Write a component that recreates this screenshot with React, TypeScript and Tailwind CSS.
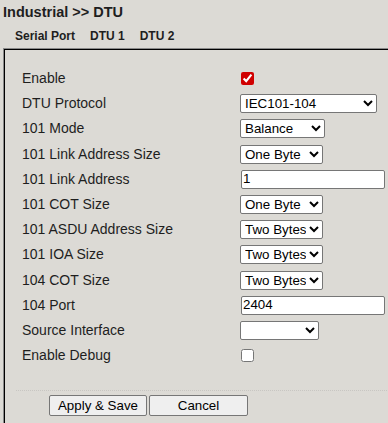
import React from 'react';

type Row = {
  label: string;
  kind: 'check' | 'select' | 'text';
  value?: string;
  options?: string[];
  width?: string;
  checked?: boolean;
};

const rows: Row[] = [
  { label: 'Enable', kind: 'check', checked: true },
  { label: 'DTU Protocol', kind: 'select', value: 'IEC101-104', options: ['IEC101-104'], width: 'w-[137px]' },
  { label: '101 Mode', kind: 'select', value: 'Balance', options: ['Balance', 'Unbalance'], width: 'w-[85px]' },
  { label: '101 Link Address Size', kind: 'select', value: 'One Byte', options: ['One Byte', 'Two Bytes'], width: 'w-[83px]' },
  { label: '101 Link Address', kind: 'text', value: '1' },
  { label: '101 COT Size', kind: 'select', value: 'One Byte', options: ['One Byte', 'Two Bytes'], width: 'w-[83px]' },
  { label: '101 ASDU Address Size', kind: 'select', value: 'Two Bytes', options: ['One Byte', 'Two Bytes'], width: 'w-[83px]' },
  { label: '101 IOA Size', kind: 'select', value: 'Two Bytes', options: ['One Byte', 'Two Bytes', 'Three Bytes'], width: 'w-[83px]' },
  { label: '104 COT Size', kind: 'select', value: 'Two Bytes', options: ['One Byte', 'Two Bytes'], width: 'w-[83px]' },
  { label: '104 Port', kind: 'text', value: '2404' },
  { label: 'Source Interface', kind: 'select', value: '', options: [''], width: 'w-[79px]' },
  { label: 'Enable Debug', kind: 'check', checked: false },
];

function Field({ row }: { row: Row }) {
  if (row.kind === 'check') {
    return (
      <input
        type="checkbox"
        defaultChecked={row.checked}
        className="ml-[1px] h-[13px] w-[13px] m-0 accent-[#d00000]"
      />
    );
  }
  if (row.kind === 'text') {
    return (
      <input
        type="text"
        defaultValue={row.value}
        className="ml-[1px] h-[19px] w-[144px] border border-[#767676] rounded-[2px] bg-white px-[1px] text-[13.33px] text-black outline-none"
      />
    );
  }
  return (
    <select
      defaultValue={row.value}
      className={`${row.width} h-[19px] border border-[#767676] rounded-[2px] bg-white text-[13.33px] text-black`}
    >
      {row.options!.map((o) => (
        <option key={o} value={o}>{o}</option>
      ))}
    </select>
  );
}

export default function App() {
  return (
    <div className="w-[388px] h-[423px] overflow-hidden bg-[#dcdad5] font-['Liberation_Sans',Arial,sans-serif] text-[#1e1e1e]">
      <div className="pl-[3px] pt-[4px] h-[22px] text-[14.5px] font-bold leading-[16px]">Industrial &gt;&gt; DTU</div>
      <div className="flex pl-[15px] pt-[5px] h-[22px] text-[12px] font-bold gap-[15px]">
        <span>Serial Port</span>
        <span>DTU 1</span>
        <span>DTU 2</span>
      </div>

      <div className="ml-[3px] mt-[4px] w-[420px] border-l border-t border-[#8a8a8a]">
        <div className="border-l border-t border-black pt-[16px] pl-[17px]">
          <div className="flex flex-col text-[14px]">
            {rows.map((row) => (
              <div key={row.label} className="flex items-center h-[25.2px]">
                <div className="w-[218px]">{row.label}</div>
                <Field row={row} />
              </div>
            ))}
          </div>

          <div className="mt-[22px] -ml-[6px] border-t border-dotted border-[#c8c6c2]" />

          <div className="flex gap-[2px] pl-[27px] pt-[4px] pb-[10px]">
            <button className="w-[98px] h-[21px] border border-[#767676] rounded-[2px] bg-[#efefef] text-[13.33px] text-black">
              Apply &amp; Save
            </button>
            <button className="w-[99px] h-[21px] border border-[#767676] rounded-[2px] bg-[#efefef] text-[13.33px] text-black">
              Cancel
            </button>
          </div>
        </div>
      </div>
    </div>
  );
}
